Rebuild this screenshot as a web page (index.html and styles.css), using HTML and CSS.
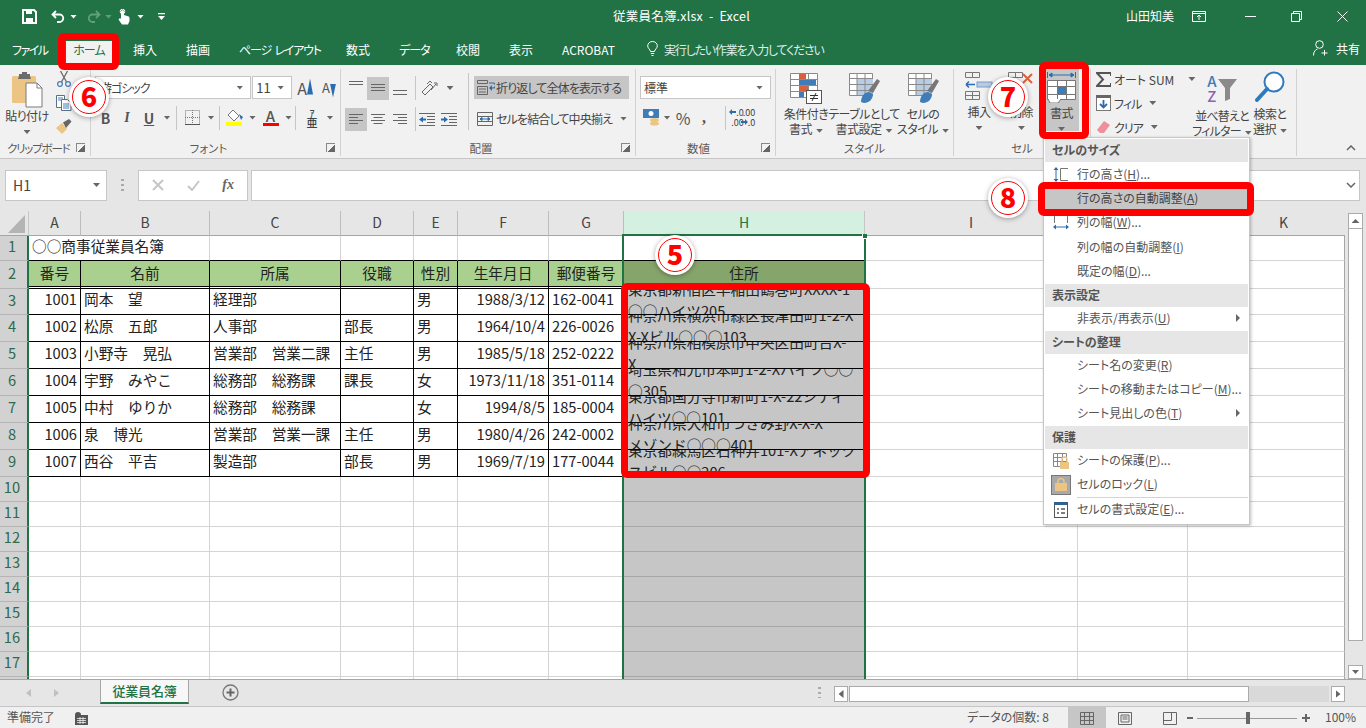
FILE: index.html
```html
<!DOCTYPE html>
<html lang="ja">
<head>
<meta charset="utf-8">
<title>従業員名簿.xlsx - Excel</title>
<link rel="stylesheet" href="styles.css">
</head>
<body>
<div class="app">

<header class="titlebar">
  <div class="qat">
    <svg class="q-save" width="15" height="15" viewBox="0 0 15 15"><path d="M1 1h11l2 2v11H1z" fill="none" stroke="#fff" stroke-width="2"/><rect x="4" y="1" width="6" height="4" fill="#fff"/><rect x="4" y="9" width="7" height="5" fill="#fff"/></svg>
    <svg class="q-undo" width="14" height="14" viewBox="0 0 14 14"><path d="M5 1L1.500 4.500 5 8M2 4.500h6.500a3.500 3.500 0 0 1 0 7.500H6" fill="none" stroke="#fff" stroke-width="1.800"/></svg>
    <i class="caret white c-undo"></i>
    <svg class="q-redo" width="14" height="14" viewBox="0 0 14 14"><path d="M9 1l3.500 3.500L9 8M12 4.500H5.500a3.500 3.500 0 0 0 0 7.500H8" fill="none" stroke="#5f9e7e" stroke-width="1.800"/></svg>
    <i class="caret dim c-redo"></i>
    <svg class="q-touch" width="12" height="16" viewBox="0 0 12 16"><path d="M3 7V2.500a1.500 1.500 0 0 1 3 0V6l4 1.200c1 .3 1.500 1 1.500 2V12l-1.500 3.500H4L.5 10.500 2 9l1 1z" fill="#fff"/><circle cx="4.500" cy="2.500" r="2.300" fill="none" stroke="#fff"/></svg>
    <i class="caret white c-touch"></i>
    <svg class="q-more" width="7" height="7" viewBox="0 0 7 7"><path d="M0 0h7v1.200H0zM0 3h7L3.500 7z" fill="#fff"/></svg>
  </div>
  <div class="doc-title">従業員名簿.xlsx&nbsp; - &nbsp;Excel</div>
  <div class="win">
    <span class="user">山田知美</span>
    <svg class="w-ribbon" width="14" height="11" viewBox="0 0 14 11"><path d="M.5.500h13v10H.5zM.5 2.500h13M7 9V4.500M5 6l2-2 2 2" fill="none" stroke="#fff"/></svg>
    <svg class="w-min" width="11" height="11" viewBox="0 0 11 11"><path d="M0 5.500h11" stroke="#fff"/></svg>
    <svg class="w-max" width="11" height="11" viewBox="0 0 11 11"><path d="M.5 2.500h8v8h-8zM2.500 2.500v-2h8v8h-2" fill="none" stroke="#fff"/></svg>
    <svg class="w-close" width="11" height="11" viewBox="0 0 11 11"><path d="M.5.500l10 10M10.500.500l-10 10" stroke="#fff"/></svg>
  </div>
</header>

<nav class="tabs">
  <span class="tab t-file">ファイル</span>
  <span class="tab t-home">ホーム</span>
  <span class="tab t-ins">挿入</span>
  <span class="tab t-std">描画</span>
  <span class="tab t-page">ページ レイアウト</span>
  <span class="tab t-std">数式</span>
  <span class="tab t-data">データ</span>
  <span class="tab t-std">校閲</span>
  <span class="tab t-std">表示</span>
  <span class="tab t-acro">ACROBAT</span>
  <span class="tell">
    <svg width="11" height="15" viewBox="0 0 11 15"><path d="M3.500 10.500C3 8 .7 7.500.7 4.800a4.800 4.300 0 0 1 9.600 0c0 2.700-2.300 3.200-2.800 5.700zM3.800 12.500h3.400M4.500 14.500h2" fill="none" stroke="#fff"/></svg>
    実行したい作業を入力してください
  </span>
  <span class="share">
    <svg width="16" height="16" viewBox="0 0 16 16"><circle cx="6.500" cy="4.500" r="3.800" fill="none" stroke="#fff"/><path d="M.5 15.500c0-4 2-6 4-6.500M11.500 10v5.500M8.500 13h6" fill="none" stroke="#fff"/></svg>
    共有
  </span>
</nav>

<section class="ribbon">
  <div class="group g1">
    <div class="gbody clip-body">
      <div class="paste">
        <svg width="32" height="36" viewBox="0 0 32 36"><rect x="0" y="4" width="24" height="27" rx="1.500" fill="#ecc585"/><path d="M7 4V2h3V0h5v2h3v2l1 3H6z" fill="#6b6b6b"/><path d="M14 11h11l5 5v19H14z" fill="#fff" stroke="#7a7a7a"/><path d="M25 11v5h5" fill="none" stroke="#7a7a7a"/></svg>
        <span class="big-label">貼り付け</span>
        <i class="caret"></i>
      </div>
      <div class="clip-tools">
        <svg width="14" height="16" viewBox="0 0 14 16"><path d="M3.500 0l6 11M10.500 0l-6 11" stroke="#6a6a6a" stroke-width="1.300"/><circle cx="3" cy="13" r="2.400" fill="none" stroke="#4a7ebb" stroke-width="1.300"/><circle cx="11" cy="13" r="2.400" fill="none" stroke="#4a7ebb" stroke-width="1.300"/></svg>
        <svg width="16" height="16" viewBox="0 0 16 16"><path d="M.5.500h8v12h-8z" fill="#fff" stroke="#5a6f88"/><path d="M5.500 4.500h6l3.500 3.500v7.500H5.500z" fill="#fff" stroke="#5a6f88"/><path d="M7 9h6M7 11h6M7 13h6M2 3h5M2 5h3" stroke="#4a7ebb"/></svg>
        <svg width="16" height="15" viewBox="0 0 16 15"><path d="M0 9l6-5 5 6-5 5z" fill="#ecc585"/><path d="M7 3.500L13 0l2.500 2.500L10 9z" fill="#666"/></svg>
      </div>
    </div>
    <div class="glabel"><span>クリップボード</span><i class="launch"></i></div>
  </div>

  <div class="group g2">
    <div class="gbody col pad-font">
      <div class="font-r1">
        <div class="select font-name"><span>游ゴシック</span><i class="caret"></i></div>
        <div class="select font-size"><span>11</span><i class="caret"></i></div>
        <span class="grow-a">A<i class="tri up"></i></span>
        <span class="grow-a small">A<i class="tri down"></i></span>
      </div>
      <div class="font-r2">
        <b class="fmt">B</b>
        <em class="fmt serif">I</em>
        <u class="fmt under">U</u>
        <i class="caret"></i>
        <i class="vsep"></i>
        <svg width="15" height="15" viewBox="0 0 15 15"><path d="M.5.500h14v14H.5zM7.500 0v15M0 7.500h15" fill="none" stroke="#777" stroke-dasharray="1 1"/><path d="M0 14.500h15" stroke="#555"/></svg>
        <i class="caret"></i>
        <i class="vsep"></i>
        <svg width="18" height="17" viewBox="0 0 18 17"><path d="M7 1l6 6-5 5-6-6z" fill="#fff" stroke="#777"/><path d="M13 5l4 3-2 3z" fill="#2b6cb0"/><rect x="0" y="13" width="16" height="4" fill="#ffff00"/></svg>
        <i class="caret"></i>
        <span class="font-color">A</span>
        <i class="caret"></i>
        <i class="vsep"></i>
        <span class="phonetic"><small>ｱ</small>亜</span>
        <i class="caret"></i>
      </div>
    </div>
    <div class="glabel"><span>フォント</span><i class="launch"></i></div>
  </div>

  <div class="group g3">
    <div class="gbody align">
      <div class="col align-left">
        <div class="al-r1">
          <svg class="al" width="14" height="16" viewBox="0 0 14 16"><path d="M0 1.500h14M0 4.500h14" stroke="#666"/></svg>
          <span class="al on"><svg width="14" height="8" viewBox="0 0 14 8"><path d="M0 .5h14M0 3.500h14M0 6.500h14" stroke="#666"/></svg></span>
          <svg class="al" width="14" height="16" viewBox="0 0 14 16"><path d="M0 10.500h14M0 14.500h14" stroke="#666"/></svg>
          <i></i>
          <i class="vsep"></i>
          <svg width="20" height="16" viewBox="0 0 20 16"><path d="M1 12l8-8 3 3-8 8zM10 10l5-6M13 3h3v3" fill="none" stroke="#666"/><path d="M6 4l3-3 2 2" fill="none" stroke="#666"/></svg>
          <i class="caret"></i>
        </div>
        <div class="al-r2">
          <span class="al on"><svg width="14" height="11" viewBox="0 0 14 11"><path d="M0 .5h14M0 3.500h9M0 6.500h14M0 9.500h9" stroke="#666"/></svg></span>
          <svg width="14" height="11" viewBox="0 0 14 11"><path d="M0 .5h14M2.500 3.500h9M0 6.500h14M2.500 9.500h9" stroke="#666"/></svg>
          <svg width="14" height="11" viewBox="0 0 14 11"><path d="M0 .5h14M5 3.500h9M0 6.500h14M5 9.500h9" stroke="#666"/></svg>
          <i></i>
          <i class="vsep"></i>
          <svg width="16" height="13" viewBox="0 0 16 13"><path d="M0 .5h16M8 3.500h8M8 6.500h8M8 9.500h8M0 12.500h16" stroke="#666"/><path d="M0 6.500L4 3.500v2h3v2H4v2z" fill="#2b6cb0"/></svg>
          <svg width="16" height="13" viewBox="0 0 16 13"><path d="M0 .5h16M8 3.500h8M8 6.500h8M8 9.500h8M0 12.500h16" stroke="#666"/><path d="M7 6.500L3 3.500v2H0v2h3v2z" fill="#2b6cb0"/></svg>
        </div>
      </div>
      <i class="vsep tall"></i>
      <div class="col align-right">
        <div class="wrapbtn on">
          <svg width="18" height="15" viewBox="0 0 18 15"><path d="M.5.500h10v3H.5zM.5 6.500h10v8H.5zM2 9h7M2 12h7" fill="none" stroke="#666"/><path d="M12 3h4a1.500 1.500 0 0 1 0 5h-3" fill="none" stroke="#2b6cb0" stroke-width="1.200"/><path d="M15 5l-3 3 3 3z" fill="#2b6cb0"/></svg>
          <span>折り返して全体を表示する</span>
        </div>
        <div class="wrapbtn">
          <svg width="16" height="14" viewBox="0 0 16 14"><path d="M.5.500h15v13H.5zM.5 4.500h15M.5 9.500h15" fill="none" stroke="#666"/><path d="M3 7h10M3 7l2-1.500v3zM13 7l-2-1.500v3z" stroke="#2b6cb0" fill="#2b6cb0"/></svg>
          <span class="merge-t">セルを結合して中央揃え</span>
          <i class="caret push"></i>
        </div>
      </div>
    </div>
    <div class="glabel"><span class="mid">配置</span><i class="launch"></i></div>
  </div>

  <div class="group g4">
    <div class="gbody col pad-num">
      <div class="select num-fmt"><span>標準</span><i class="caret"></i></div>
      <div class="num-r2">
        <svg width="17" height="17" viewBox="0 0 17 17"><rect x="0" y="0" width="16" height="9" fill="#3f7cb8"/><circle cx="8" cy="4.500" r="2.500" fill="#fff"/><ellipse cx="11.500" cy="11" rx="4.500" ry="2" fill="#ecc585"/><ellipse cx="11.500" cy="14.500" rx="4.500" ry="2" fill="#ecc585"/></svg>
        <i class="caret"></i>
        <span class="pct">%</span>
        <b class="comma">,</b>
        <i class="vsep"></i>
        <span class="dec"><svg width="7" height="6" viewBox="0 0 7 6"><path d="M0 3l3-3v2h4v2H3v2z" fill="#2b6cb0"/></svg>.0<br>.00</span>
        <span class="dec">.00<br><svg width="7" height="6" viewBox="0 0 7 6"><path d="M7 3L4 0v2H0v2h4v2z" fill="#2b6cb0"/></svg>.0</span>
      </div>
    </div>
    <div class="glabel"><span class="mid">数値</span><i class="launch"></i></div>
  </div>

  <div class="group g5">
    <div class="gbody styles">
      <div class="bigbtn">
        <svg width="32" height="31" viewBox="0 0 32 31"><path d="M.5.500h27v24H.5zM9.500.500v24M18.500.500v24M.5 6.500h27M.5 12.500h27M.5 18.500h27" fill="#fff" stroke="#8a8a8a"/><rect x="9" y="1" width="7" height="5" fill="#d9603b"/><rect x="9" y="7" width="17" height="5" fill="#3f7cb8"/><rect x="9" y="13" width="9" height="5" fill="#d9603b"/><rect x="9" y="19" width="5" height="5" fill="#3f7cb8"/><rect x="16.500" y="17.500" width="15" height="13" fill="#fff" stroke="#555"/><path d="M20 22.500h8M20 25.500h8M26 20l-4 8" stroke="#333"/></svg>
        <span class="big-label">条件付き<br>書式<i class="caret in"></i></span>
      </div>
      <div class="bigbtn">
        <svg width="31" height="31" viewBox="0 0 31 31"><path d="M.5.500h23v22H.5z" fill="#fff" stroke="#8a8a8a"/><rect x="8" y="5" width="16" height="17" fill="#b8cce4"/><path d="M0 5.500h24M0 11.500h24M0 17.500h24M8 0v23M16 0v23" stroke="#8a8a8a"/><path d="M19 18L28 6l3 2-7 12z" fill="#777"/><path d="M12 29c0-6 4-10 8-10l4 2c0 5-4 9-9 9z" fill="#3f7cb8"/></svg>
        <span class="big-label">テーブルとして<br>書式設定<i class="caret in"></i></span>
      </div>
      <div class="bigbtn">
        <svg width="31" height="31" viewBox="0 0 31 31"><path d="M.5.500h23v22H.5z" fill="#fff" stroke="#8a8a8a"/><rect x="8" y="5" width="16" height="17" fill="#b8cce4"/><path d="M0 5.500h24M0 11.500h24M0 17.500h24M8 0v23M16 0v23" stroke="#8a8a8a"/><path d="M19 18L28 6l3 2-7 12z" fill="#777"/><path d="M12 29c0-6 4-10 8-10l4 2c0 5-4 9-9 9z" fill="#3f7cb8"/></svg>
        <span class="big-label">セルの<br>スタイル<i class="caret in"></i></span>
      </div>
    </div>
    <div class="glabel"><span>スタイル</span></div>
  </div>

  <div class="group g6">
    <div class="gbody cells">
      <div class="cellbtn">
        <svg width="28" height="28" viewBox="0 0 28 28"><path d="M.5.500h7v5h-7zM7.500.500h7v5h-7zM.5 19.500h7v8h-7zM7.500 19.500h7v8h-7zM.5 23.500h14" fill="none" stroke="#777"/><rect x="12" y="10" width="15" height="5" fill="#b8cce4" stroke="#7a9cc4"/><path d="M1 12.500h9M1 12.500l3-3M1 12.500l3 3" fill="none" stroke="#2b6cb0" stroke-width="1.500"/></svg>
        <span class="big-label">挿入</span>
        <i class="caret"></i>
      </div>
      <div class="cellbtn">
        <svg width="28" height="28" viewBox="0 0 28 28"><path d="M.5.500h7v5h-7zM7.500.500h7v5h-7zM.5 19.500h7v8h-7zM7.500 19.500h7v8h-7z" fill="none" stroke="#777"/><path d="M15 2l9 9M24 2l-9 9" stroke="#d9603b" stroke-width="2"/></svg>
        <span class="big-label">削除</span>
        <i class="caret"></i>
      </div>
      <div class="cellbtn on">
        <svg width="29" height="31" viewBox="0 0 29 31"><path d="M.5 0v6M28.500 0v6M2 3h25M2 3l3-2v4zM27 3l-3-2v4z" stroke="#2b6cb0" fill="#2b6cb0"/><path d="M.5 8.500h28v19H.5z" fill="#fff" stroke="#777"/><rect x="11" y="14" width="8" height="9" fill="#3f7cb8"/><path d="M0 14.500h29M0 22.500h29M10.500 8v19M19.500 8v19" stroke="#777"/><path d="M1 27l2 4h8l3-4" fill="#fff" stroke="#777"/></svg>
        <span class="big-label">書式</span>
        <i class="caret"></i>
      </div>
    </div>
    <div class="glabel"><span>セル</span></div>
  </div>

  <div class="group g7">
    <div class="gbody edit">
      <div class="col edit-list">
        <div class="edit-row"><svg width="15" height="15" viewBox="0 0 15 15"><path d="M15 4V1H1l6 6.500L1 14h14v-3" fill="none" stroke="#555" stroke-width="2"/></svg><span>オート SUM</span><i class="caret c-sum"></i></div>
        <div class="edit-row"><svg width="15" height="16" viewBox="0 0 15 16"><rect x=".5" y=".5" width="14" height="15" fill="#fff" stroke="#777"/><rect x="0" y="0" width="15" height="3" fill="#666"/><path d="M7.500 5v7M4 9l3.500 3.500L11 9" fill="none" stroke="#2b6cb0" stroke-width="1.800"/></svg><span class="tight">フィル</span><i class="caret"></i></div>
        <div class="edit-row"><svg width="15" height="14" viewBox="0 0 15 14"><path d="M8 1l6 4-6 8H4L1 10z" fill="#ee8f9c"/></svg><span class="tight">クリア</span><i class="caret"></i></div>
      </div>
      <div class="bigbtn sort">
        <span class="sort-icon"><span class="az"><b class="aa">A</b><b class="zz">Z</b></span><svg width="19" height="22" viewBox="0 0 19 22"><path d="M0 0h19l-7 9v11l-5 2V9z" fill="#8a8a8a"/></svg></span>
        <span class="big-label">並べ替えと<br>フィルター<i class="caret in"></i></span>
      </div>
      <div class="bigbtn find">
        <svg width="30" height="33" viewBox="0 0 30 33"><circle cx="19" cy="11" r="9.500" fill="#fff" stroke="#2f7abf" stroke-width="2"/><path d="M12 18L2 29" stroke="#2f7abf" stroke-width="4" stroke-linecap="round"/></svg>
        <span class="big-label">検索と<br>選択<i class="caret in"></i></span>
      </div>
    </div>
  </div>

  <div class="collapse"><svg width="10" height="6" viewBox="0 0 10 6"><path d="M1 5l4-4 4 4" fill="none" stroke="#666" stroke-width="1.500"/></svg></div>
</section>

<section class="formula">
  <div class="namebox"><span>H1</span><i class="caret"></i></div>
  <div class="dots"></div>
  <div class="fxbox">
    <svg width="12" height="12" viewBox="0 0 12 12"><path d="M1 1l10 10M11 1L1 11" stroke="#c6c6c6" stroke-width="2"/></svg>
    <svg width="13" height="11" viewBox="0 0 13 11"><path d="M1 6l4 4 7-9" fill="none" stroke="#c6c6c6" stroke-width="2"/></svg>
    <em class="fx">fx</em>
  </div>
  <div class="input"><svg width="10" height="6" viewBox="0 0 10 6"><path d="M1 1l4 4 4-4" fill="none" stroke="#666" stroke-width="1.500"/></svg></div>
</section>

<section class="sheetwrap">
  <div class="sheet">
    <div class="corner"><i></i></div><div class="ch">A</div><div class="ch">B</div><div class="ch">C</div><div class="ch">D</div><div class="ch">E</div><div class="ch">F</div><div class="ch">G</div><div class="ch sel-h">H</div><div class="ch">I</div><div class="ch">J</div><div class="ch end">K</div>

    <div class="rh">1</div><div class="c bb nor">○○商事従業員名簿</div><div class="c bb"></div><div class="c bb"></div><div class="c bb"></div><div class="c bb"></div><div class="c bb"></div><div class="c bb"></div><div class="c bb h1"></div><div class="c"></div><div class="c"></div><div class="c end"></div>

    <div class="rh">2</div><div class="c hd">番号</div><div class="c hd">名前</div><div class="c hd">所属</div><div class="c hd">役職</div><div class="c hd">性別</div><div class="c hd">生年月日</div><div class="c hd">郵便番号</div><div class="c hd hh">住所</div><div class="c"></div><div class="c"></div><div class="c end"></div>

    <div class="rh">3</div><div class="c k r">1001</div><div class="c k">岡本　望</div><div class="c k">経理部</div><div class="c k"></div><div class="c k">男</div><div class="c k r">1988/3/12</div><div class="c k">162-0041</div><div class="c k s addr"><p>東京都新宿区早稲田鶴巻町XXXX-1<br>○○ハイツ205</p></div><div class="c"></div><div class="c"></div><div class="c end"></div>
    <div class="rh">4</div><div class="c k r">1002</div><div class="c k">松原　五郎</div><div class="c k">人事部</div><div class="c k">部長</div><div class="c k">男</div><div class="c k r">1964/10/4</div><div class="c k">226-0026</div><div class="c k s addr"><p>神奈川県横浜市緑区長津田町1-2-X<br>X-Xビル○○○103</p></div><div class="c"></div><div class="c"></div><div class="c end"></div>
    <div class="rh">5</div><div class="c k r">1003</div><div class="c k">小野寺　晃弘</div><div class="c k">営業部　営業二課</div><div class="c k">主任</div><div class="c k">男</div><div class="c k r">1985/5/18</div><div class="c k">252-0222</div><div class="c k s addr"><p>神奈川県相模原市中央区田町台X-<br>X</p></div><div class="c"></div><div class="c"></div><div class="c end"></div>
    <div class="rh">6</div><div class="c k r">1004</div><div class="c k">宇野　みやこ</div><div class="c k">総務部　総務課</div><div class="c k">課長</div><div class="c k">女</div><div class="c k r">1973/11/18</div><div class="c k">351-0114</div><div class="c k s addr"><p>埼玉県和光市本町1-2-Xハイツ○○<br>○305</p></div><div class="c"></div><div class="c"></div><div class="c end"></div>
    <div class="rh">7</div><div class="c k r">1005</div><div class="c k">中村　ゆりか</div><div class="c k">総務部　総務課</div><div class="c k"></div><div class="c k">女</div><div class="c k r">1994/8/5</div><div class="c k">185-0004</div><div class="c k s addr"><p>東京都国分寺市新町1-X-22シティ<br>ハイツ○○101</p></div><div class="c"></div><div class="c"></div><div class="c end"></div>
    <div class="rh">8</div><div class="c k r">1006</div><div class="c k">泉　博光</div><div class="c k">営業部　営業一課</div><div class="c k">主任</div><div class="c k">男</div><div class="c k r">1980/4/26</div><div class="c k">242-0002</div><div class="c k s addr"><p>神奈川県大和市つきみ野X-X-X<br>メゾンド○○○401</p></div><div class="c"></div><div class="c"></div><div class="c end"></div>
    <div class="rh">9</div><div class="c k r">1007</div><div class="c k">西谷　平吉</div><div class="c k">製造部</div><div class="c k">部長</div><div class="c k">男</div><div class="c k r">1969/7/19</div><div class="c k">177-0044</div><div class="c k s addr"><p>東京都練馬区石神井101-Xアネック<br>スビル○○206</p></div><div class="c"></div><div class="c"></div><div class="c end"></div>

    <div class="rh">10</div><div class="c"></div><div class="c"></div><div class="c"></div><div class="c"></div><div class="c"></div><div class="c"></div><div class="c"></div><div class="c s"></div><div class="c"></div><div class="c"></div><div class="c end"></div>
    <div class="rh">11</div><div class="c"></div><div class="c"></div><div class="c"></div><div class="c"></div><div class="c"></div><div class="c"></div><div class="c"></div><div class="c s"></div><div class="c"></div><div class="c"></div><div class="c end"></div>
    <div class="rh">12</div><div class="c"></div><div class="c"></div><div class="c"></div><div class="c"></div><div class="c"></div><div class="c"></div><div class="c"></div><div class="c s"></div><div class="c"></div><div class="c"></div><div class="c end"></div>
    <div class="rh">13</div><div class="c"></div><div class="c"></div><div class="c"></div><div class="c"></div><div class="c"></div><div class="c"></div><div class="c"></div><div class="c s"></div><div class="c"></div><div class="c"></div><div class="c end"></div>
    <div class="rh">14</div><div class="c"></div><div class="c"></div><div class="c"></div><div class="c"></div><div class="c"></div><div class="c"></div><div class="c"></div><div class="c s"></div><div class="c"></div><div class="c"></div><div class="c end"></div>
    <div class="rh">15</div><div class="c"></div><div class="c"></div><div class="c"></div><div class="c"></div><div class="c"></div><div class="c"></div><div class="c"></div><div class="c s"></div><div class="c"></div><div class="c"></div><div class="c end"></div>
    <div class="rh">16</div><div class="c"></div><div class="c"></div><div class="c"></div><div class="c"></div><div class="c"></div><div class="c"></div><div class="c"></div><div class="c s"></div><div class="c"></div><div class="c"></div><div class="c end"></div>
    <div class="rh">17</div><div class="c"></div><div class="c"></div><div class="c"></div><div class="c"></div><div class="c"></div><div class="c"></div><div class="c"></div><div class="c s"></div><div class="c"></div><div class="c"></div><div class="c end"></div>
    <div class="rh stub"></div><div class="c stub"></div><div class="c stub"></div><div class="c stub"></div><div class="c stub"></div><div class="c stub"></div><div class="c stub"></div><div class="c stub"></div><div class="c s stub"></div><div class="c stub"></div><div class="c stub"></div><div class="c end stub"></div>

    <div class="selection"><i></i></div>
  </div>
  <aside class="vscroll">
    <div class="sb-btn up"><i class="tri-up"></i></div>
    <div class="sb-thumb"></div>
    <div class="sb-btn down"><i class="caret"></i></div>
  </aside>
</section>

<section class="tabbar">
  <div class="tabnav"><i class="nav-l"></i><i class="nav-r"></i></div>
  <div class="sheettab">従業員名簿</div>
  <div class="addsheet"><svg width="17" height="17" viewBox="0 0 17 17"><circle cx="8.500" cy="8.500" r="7.500" fill="none" stroke="#777" stroke-width="1.300"/><path d="M8.500 4.500v8M4.500 8.500h8" stroke="#666" stroke-width="2"/></svg></div>
  <div class="dots small"></div>
  <div class="hscroll">
    <div class="sb-btn"><i class="nav-l dark"></i></div>
    <div class="hthumb"></div>
    <div class="htrack"></div>
    <div class="sb-btn"><i class="nav-r dark"></i></div>
  </div>
</section>

<footer class="status">
  <span class="ready">準備完了</span>
  <svg class="macro" width="13" height="13" viewBox="0 0 13 13"><rect x="0" y="3" width="13" height="10" fill="#555"/><circle cx="3" cy="3" r="3" fill="#555"/><path d="M2 6.500h9M2 8.500h9M2 10.500h9M5 5v7M8 5v7" stroke="#f0f0f0" stroke-width=".8"/></svg>
  <span class="count">データの個数: 8</span>
  <span class="view on"><svg width="14" height="13" viewBox="0 0 14 13"><path d="M.5.500h13v12H.5zM.5 4.500h13M.5 8.500h13M4.500 0v13M9.500 0v13" fill="none" stroke="#666"/></svg></span>
  <span class="view"><svg width="14" height="13" viewBox="0 0 14 13"><path d="M.5.500h13v12H.5zM3 3h8v7H3zM4.500 5h5M4.500 7h5" fill="none" stroke="#666"/></svg></span>
  <span class="view v-break"><svg width="14" height="13" viewBox="0 0 14 13"><path d="M.5.500h13v12H.5zM.5 8.500h8V.5" fill="none" stroke="#666"/></svg></span>
  <span class="zoom-m"></span>
  <span class="slider"><i></i></span>
  <span class="zoom-p"></span>
  <span class="pct100">100%</span>
</footer>

<!-- format dropdown -->
<div class="menu">
  <div class="m-head">セルのサイズ</div>
  <div class="m-item t"><span class="m-ic"><svg width="16" height="15" viewBox="0 0 16 15"><path d="M3 1v13" stroke="#2b6cb0"/><path d="M3 0L.5 3h5zM3 15L.5 12h5z" fill="#2b6cb0"/><path d="M15 1.500H7.500v12H15" fill="none" stroke="#777"/></svg></span><span>行の高さ(<u>H</u>)...</span></div>
  <div class="m-item t sel"><span class="m-ic"></span><span>行の高さの自動調整(<u>A</u>)</span></div>
  <div class="m-item t"><span class="m-ic"><svg width="16" height="15" viewBox="0 0 16 15"><path d="M1.500 8V.5h13V8" fill="none" stroke="#777"/><path d="M2 12h12" stroke="#2b6cb0"/><path d="M0 12l3-2.500v5zM16 12l-3-2.500v5z" fill="#2b6cb0"/></svg></span><span>列の幅(<u>W</u>)...</span></div>
  <div class="m-item t"><span class="m-ic"></span><span>列の幅の自動調整(<u>I</u>)</span></div>
  <div class="m-item t"><span class="m-ic"></span><span>既定の幅(<u>D</u>)...</span></div>
  <div class="m-head">表示設定</div>
  <div class="m-item"><span class="m-ic"></span><span>非表示/再表示(<u>U</u>)</span><i class="m-arrow"></i></div>
  <div class="m-head">シートの整理</div>
  <div class="m-item"><span class="m-ic"></span><span>シート名の変更(<u>R</u>)</span></div>
  <div class="m-item"><span class="m-ic"></span><span>シートの移動またはコピー(<u>M</u>)...</span></div>
  <div class="m-item"><span class="m-ic"></span><span>シート見出しの色(<u>T</u>)</span><i class="m-arrow"></i></div>
  <div class="m-head">保護</div>
  <div class="m-item"><span class="m-ic"><svg width="16" height="16" viewBox="0 0 16 16"><path d="M.5.500h13v13H.5zM.5 4.500h13M.5 8.500h13M4.500 0v14M9.500 0v14" fill="none" stroke="#888"/><rect x="7" y="9" width="9" height="7" fill="#ecc585"/><path d="M9 9V6.500a2.500 2.500 0 0 1 5 0V9" fill="none" stroke="#ecc585" stroke-width="1.300"/></svg></span><span>シートの保護(<u>P</u>)...</span></div>
  <div class="m-item"><span class="m-ic"><span class="lockbox"><svg width="12" height="13" viewBox="0 0 12 13"><rect x="0" y="5" width="12" height="8" fill="#ecc585"/><path d="M3 5V3.500a3 3 0 0 1 6 0V5" fill="none" stroke="#ecc585" stroke-width="1.500"/></svg></span></span><span>セルのロック(<u>L</u>)</span></div>
  <div class="m-sep"></div>
  <div class="m-item"><span class="m-ic"><svg width="14" height="16" viewBox="0 0 14 16"><rect x=".5" y=".5" width="13" height="15" fill="#fff" stroke="#555"/><rect x="0" y="0" width="14" height="3" fill="#33618f"/><path d="M3 7h2M3 11h2M7 7h4M7 11h4" stroke="#555" stroke-width="1.300"/></svg></span><span>セルの書式設定(<u>E</u>)...</span></div>
</div>

<!-- red call-outs lying over the UI -->
<div class="mark m-home"></div>
<div class="mark m-format"></div>
<div class="mark m-auto"></div>
<div class="mark m-addr"></div>
<div class="badge b6"><span>6</span></div>
<div class="badge b7"><span>7</span></div>
<div class="badge b8"><span>8</span></div>
<div class="badge b5"><span>5</span></div>

</div>
</body>
</html>
```
FILE: styles.css
```css
*{box-sizing:border-box}
html,body{margin:0;padding:0}
body{font-family:"Noto Sans CJK JP","Noto Sans",sans-serif;color:#444;overflow:hidden;background:#f1f1f1}
.app{position:relative;width:1366px;height:728px;overflow:hidden;display:flex;flex-direction:column;font-size:12px;font-feature-settings:"palt"}
i{display:block;font-style:normal}
svg{display:block;flex:none}

/* generic bits */
.caret{width:7px;height:4px;background:#666;clip-path:polygon(0 0,100% 0,50% 100%);flex:none}
.caret.white{background:#fff}
.caret.dim{background:#5f9e7e}
.caret.in{display:inline-block;margin-left:4px;vertical-align:middle}
.vsep{width:1px;height:24px;background:#c6c6c6}
.col{display:flex;flex-direction:column}
.on{background:#c6c6c6}

/* title bar */
.titlebar{height:33px;background:#217346;color:#fff;display:grid;grid-template-columns:1fr auto 1fr;align-items:center;flex:none}
.qat{display:flex;align-items:center;padding-left:22px}
.q-undo{margin-left:14px}
.c-undo{margin-left:5px}
.q-redo{margin-left:10px}
.c-redo{margin-left:4px}
.q-touch{margin-left:6px}
.c-touch{margin-left:7px}
.q-more{margin-left:14px}
.doc-title{font-size:12.5px;letter-spacing:.2px;margin-left:-3px;padding-bottom:3px}
.win{display:flex;align-items:center;justify-content:flex-end}
.user{font-size:12px;margin-right:18px;padding-bottom:3px}
.w-ribbon{margin-right:39px}
.w-min{margin-right:35px}
.w-max{margin-right:35px}
.w-close{margin-right:18px}

/* tabs */
.tabs{height:32px;background:#217346;color:#fff;display:flex;align-items:flex-end;flex:none;padding-left:12px}
.tab{height:24px;line-height:18px;font-size:12px;text-align:left;white-space:nowrap}
.t-file{width:54px;letter-spacing:-1.5px}
.t-home{width:46px;background:#f1f1f1;color:#217346;text-align:center;letter-spacing:-1px}
.t-ins{width:53px;margin-left:21px}
.t-std{width:53px}
.t-page{width:107px;letter-spacing:-1.2px;word-spacing:2px}
.t-data{width:57px;letter-spacing:-1px}
.t-acro{width:85px}
.tell{display:flex;align-items:flex-start;gap:6px;height:24px;line-height:18px;color:#dfeee6;letter-spacing:-1.2px;white-space:nowrap}
.share{margin-left:auto;margin-right:6px;display:flex;gap:7px;height:26px;line-height:20px;align-items:flex-start}
.share svg{margin-top:1px}

/* ribbon */
.ribbon{height:94px;background:#f1f1f1;border-bottom:1px solid #c6c6c6;display:flex;flex:none;padding-bottom:2px}
.group{display:flex;flex-direction:column;border-right:1px solid #d2d2d2;margin-top:4px;flex:none}
.gbody{flex:1;min-height:0}
.glabel{height:17px;display:flex;align-items:center;font-size:11.5px;color:#5a5a5a;white-space:nowrap}
.glabel span{flex:1;text-align:center}
.launch{width:9px;height:9px;margin-right:5px;border:1px solid #888;border-width:1px 0 0 1px;background:linear-gradient(135deg,transparent 55%,#666 55%)}
.g1{width:91px}.g2{width:250px}.g3{width:295px}.g4{width:140px}.g5{width:178px}.g6{width:137px}.g7{width:206px}
.big-label{font-size:12px;line-height:15px;text-align:center;white-space:nowrap;color:#444;display:block;letter-spacing:-.5px}

.clip-body{display:flex}
.g1 .glabel span{text-align:left;padding-left:7px;letter-spacing:-1.2px}
.paste{width:54px;display:flex;flex-direction:column;align-items:center;padding-top:3px}
.paste svg{margin-left:2px}
.paste .caret{margin-top:7px}
.clip-tools{width:20px;display:flex;flex-direction:column;gap:8px;padding-top:2px;align-items:center}

.pad-font{padding-left:4px}
.font-r1{display:flex;align-items:center;margin-top:7px;height:23px}
.select{display:flex;align-items:center;justify-content:space-between;background:#fff;border:1px solid #c6c6c6;height:23px;padding:0 7px 0 5px;font-size:12px}
.font-name{width:157px;padding-left:4px;letter-spacing:-1px}
.font-size{width:40px;margin-left:1px;padding-left:3px;font-size:13px}
.grow-a{display:flex;font-size:16px;line-height:20px;width:22px;margin-left:2px;justify-content:center;color:#555}
.grow-a.small{font-size:13px}
.tri{width:6px;height:4px;margin-top:1px;background:#2b6cb0}
.tri.up{clip-path:polygon(50% 0,100% 100%,0 100%)}
.tri.down{clip-path:polygon(0 0,100% 0,50% 100%)}
.font-r2{display:grid;grid-template-columns:21px 22px 22px 14px 4px 28px 10px 6px 26px 9px 27px 9px 5px 28px 8px;place-items:center;margin-top:6px;height:25px}
.fmt{font-size:14px;line-height:18px;color:#555;font-style:normal}
.serif{font-family:"Liberation Serif",serif;font-style:italic;font-weight:700}
.under{font-weight:700}
.font-color{font-size:15px;font-weight:500;line-height:14px;color:#555;border-bottom:3px solid #f00;width:16px;text-align:center;height:17px}
.phonetic{display:flex;flex-direction:column;align-items:center;line-height:9px;font-size:11px;color:#444;font-weight:500}
.phonetic small{font-size:10px}

.align{display:flex}
.align-left{width:127px;padding-left:4px}
.al-r1,.al-r2{display:grid;place-items:center;height:23px}
.al-r1{grid-template-columns:22px 22px 22px 4px 1px 30px 8px;margin-top:7px}
.al-r2{grid-template-columns:22px 22px 22px 4px 1px 22px 22px;margin-top:8px}
.al{width:22px;height:23px;display:flex;align-items:center;justify-content:center}
svg.al{width:14px;height:16px}
.tall{height:57px;margin-top:4px;flex:none}
.align-right{padding-left:5px;flex:1}
.wrapbtn{display:flex;align-items:center;gap:1px;height:23px;width:155px;padding-left:3px;margin-top:7px;color:#444;font-size:12px;white-space:nowrap;letter-spacing:-.85px}
.wrapbtn + .wrapbtn{margin-top:8px;gap:2px}
.merge-t{margin-left:1px}
.push{margin-left:auto;margin-right:2px}

.pad-num{padding:7px 4px 0}
.num-fmt{width:131px;padding-left:3px;flex:none}
.num-r2{display:grid;grid-template-columns:22px 10px 22px 20px 22px 1px 22px 22px;place-items:center;height:25px;margin-top:6px}
.pct{font-size:16px;color:#555}
.comma{font-size:16px;line-height:12px;color:#555;font-family:"Liberation Serif",serif}
.dec{font-size:9px;line-height:10px;color:#444;text-align:right;white-space:nowrap}
.dec svg{display:inline-block;vertical-align:1px}

.styles{display:grid;grid-template-columns:52px 64px 54px;padding-left:4px}
.bigbtn{display:flex;flex-direction:column;align-items:center;padding-top:4px;min-width:0}
.bigbtn svg{margin-bottom:2px}
.cells{display:grid;grid-template-columns:42px 43px 36px;padding-left:4px}
.cellbtn{display:flex;flex-direction:column;align-items:center;padding-top:3px}
.cellbtn svg{margin-bottom:4px}
.cellbtn .caret{margin-top:7px}
.cellbtn.on{height:64px;margin-top:-2px;padding-top:5px;margin-left:1px}
.cellbtn.on svg{margin-bottom:2px}
.edit{display:flex;padding-left:5px}
.edit-list{width:100px;padding-top:2px;gap:8px}
.edit-row{display:flex;align-items:center;gap:3px;height:16px;white-space:nowrap;font-size:12px}
.tight{letter-spacing:-1px}
.edit-row .caret{margin-left:5px}
.edit-row .c-sum{margin-left:11px}
.sort{width:52px}
.sort .big-label{letter-spacing:-.8px}
.find{width:44px;padding-top:2px}
.sort-icon{display:flex;align-items:flex-start;height:33px;gap:1px;margin-bottom:2px}
.sort-icon svg{margin-top:6px;margin-bottom:0}
.az{display:flex;flex-direction:column;font-size:15px;line-height:15px;font-weight:500}
.aa{color:#3f7cb8;font-weight:500}.zz{color:#8e5fb5;font-weight:500}
.collapse{flex:1;display:flex;justify-content:flex-end;align-items:flex-end;padding:0 10px 5px 0}

/* formula bar */
.formula{height:52px;background:#e6e6e6;display:flex;align-items:center;padding:0 6px 0 5px;flex:none}
.namebox{width:102px;height:31px;background:#fff;border:1px solid #c6c6c6;display:flex;align-items:center;justify-content:space-between;padding:0 6px 0 7px;font-size:14px;color:#444}
.dots{width:3px;height:13px;margin:0 14px;background:repeating-linear-gradient(#aaa 0 2px,transparent 2px 5px)}
.fxbox{width:110px;height:31px;background:#fff;border:1px solid #c6c6c6;display:flex;align-items:center;padding:0 13px;justify-content:space-between}
.fx{font-family:"Liberation Serif",serif;font-size:14px;font-weight:700;color:#666}
.input{flex:1;height:31px;background:#fff;border:1px solid #c6c6c6;margin-left:3px;display:flex;align-items:center;justify-content:flex-end;padding-right:3px}

/* worksheet */
.sheetwrap{display:flex;height:468px;flex:none;background:#e6e6e6}
.sheet{position:relative;width:1345px;flex:none;display:grid;background:#fff;font-size:14.67px;font-feature-settings:normal;color:#222;
  grid-template-columns:29px 52px 129px 131px 73px 44px 91px 75px 241px 213px 110px 157px;
  grid-template-rows:25px 25px 28px 26px repeat(6,27px) repeat(8,25px) 2px}
.corner{background:#e6e6e6;border-right:1px solid #c6c6c6;border-bottom:1px solid #a6a6a6;padding:4px 3px 2px 8px}
.corner i{width:17px;height:18px;background:#b4b4b4;clip-path:polygon(100% 0,100% 100%,0 100%)}
.ch{background:#e6e6e6;border-right:1px solid #bdbdbd;border-bottom:1px solid #a6a6a6;display:flex;align-items:center;justify-content:center;color:#444;font-size:14px;padding-bottom:2px}
.ch.end{border-right:none;padding-left:34px}
.sel-h{background:#d3f0e0;color:#217346;border-right-color:#c6c6c6}
.rh{background:#d2d2d2;border-right:2px solid #217346;border-bottom:1px solid #b5b5b5;display:flex;align-items:center;justify-content:center;color:#2d6b4c;font-size:14.67px;padding:0 3px 5px 0}
.c{border-right:1px solid #d4d4d4;border-bottom:1px solid #d4d4d4;display:flex;align-items:center;padding:0 3px 6px;white-space:nowrap;min-width:0}
.c.end{border-right:1px solid #a6a6a6}
.bb{border-bottom-color:#000}
.nor{border-right:none}
.hd{background:#a9d08e;background-clip:padding-box;border-right-color:#000;border-bottom:3px double #000;justify-content:center;padding-bottom:3px}
.k{border-right-color:#000;border-bottom-color:#000}
.r{justify-content:flex-end}
.s{background:#c6c6c6;border-right-color:#a6a6a6;border-bottom-color:#a6a6a6}
.hh{background:#86a56b;background-clip:padding-box}
.h1{background:#fff}
.addr{align-items:flex-start;overflow:hidden;padding:0 3px 0 4px;border-bottom-color:#000;border-right-color:#000}
.addr p{margin:-11px 0 0;line-height:21.5px}
.stub{border-bottom:none;padding:0}
.selection{position:absolute;left:622px;top:23px;width:244px;height:445px;border:solid #217346;border-width:2px 2px 0;pointer-events:none}
.selection i{position:absolute;right:-3px;top:-2px;width:5px;height:5px;background:#217346;border:1px solid #fff;border-width:0 0 1px 1px}

.vscroll{flex:1;display:flex;flex-direction:column;padding:2px 3px 0 3px}
.sb-btn{background:#fff;border:1px solid #ababab;display:flex;align-items:center;justify-content:center;flex:none}
.up{height:16px}
.down{height:14px;margin-top:auto}
.tri-up{width:8px;height:4px;background:#666;clip-path:polygon(50% 0,100% 100%,0 100%)}
.sb-thumb{height:412px;background:#fff;border:1px solid #ababab;border-top:none}

/* sheet tabs */
.tabbar{height:28px;background:#e6e6e6;border-top:1px solid #a6a6a6;border-bottom:1px solid #c6c6c6;display:flex;flex:none}
.tabnav{width:100px;display:flex;align-items:center;gap:23px;padding-left:26px}
.nav-l,.nav-r{width:5px;height:8px;background:#c0c0c0}
.nav-l{clip-path:polygon(100% 0,100% 100%,0 50%)}
.nav-r{clip-path:polygon(0 0,100% 50%,0 100%)}
.dark{background:#666}
.sheettab{width:89px;height:24px;background:#f7f7f7;border:1px solid #a6a6a6;border-width:0 1px 2px;border-bottom-color:#217346;color:#217346;text-align:center;font-size:13px;line-height:21px;font-weight:500;font-feature-settings:normal;letter-spacing:-.2px}
.addsheet{width:83px;display:flex;align-items:center;padding:0 0 2px 33px}
.tabbar .dots{margin:7px 13px 0 546px;height:11px}
.hscroll{display:flex;height:16px;margin-top:6px;width:511px}
.hscroll .sb-btn{width:14px}
.hthumb{width:400px;margin-left:1px;background:#fff;border:1px solid #ababab}
.htrack{width:80px;background:#d9d9d9;margin-right:2px}

/* status bar */
.status{height:22px;flex:1;background:#f0f0f0;display:flex;align-items:center;font-size:12px;color:#555}
.ready{margin-left:7px;font-feature-settings:normal;letter-spacing:-.05px;padding-bottom:3px}
.macro{margin-left:20px}
.count{margin-left:auto;margin-right:19px;padding-bottom:3px}
.view{width:38px;height:22px;display:flex;align-items:center;justify-content:center}
.v-break{width:43px;justify-content:flex-end;padding-right:10px}
.zoom-m{width:6px;height:2px;background:#666}
.slider{position:relative;width:100px;height:1px;background:#999;margin-left:4px}
.slider i{position:absolute;left:49px;top:-6px;width:4px;height:12px;background:#666}
.zoom-p{width:8px;height:8px;margin-left:5px;background:linear-gradient(#666,#666) center/8px 2px no-repeat,linear-gradient(#666,#666) center/2px 8px no-repeat}
.pct100{margin-left:15px;margin-right:6px;width:35px;font-size:12px;padding-bottom:3px}

/* drop-down */
.menu{position:absolute;left:1043px;top:137px;width:207px;height:388px;background:#fff;border:1px solid #c6c6c6;box-shadow:1px 1px 3px rgba(0,0,0,.25);padding:1px;font-size:12px;color:#555}
.m-head{height:23px;line-height:22px;background:#e6e6e6;font-weight:700;padding-left:7px;color:#555}
.m-item{height:24px;display:flex;align-items:center;white-space:nowrap;padding-bottom:2px}
.m-item.t{height:24.4px}
.m-item.sel{background:#c6c6c6;color:#444}
.m-ic{width:32px;display:flex;justify-content:center;flex:none;margin-top:2px}
.m-arrow{margin-left:auto;margin-right:8px;width:4px;height:8px;background:#666;clip-path:polygon(0 0,100% 50%,0 100%)}
.m-sep{height:1px;background:#d4d4d4;margin-left:32px}
.lockbox{width:20px;height:20px;background:#a9a9a9;border:1px solid #777;display:flex;align-items:center;justify-content:center}

/* annotations */
.mark{position:absolute;border:7px solid #f00;border-radius:6px;pointer-events:none}
.m-home{left:58px;top:33px;width:61px;height:37px}
.m-format{left:1039px;top:62px;width:50px;height:77px}
.m-auto{left:1038px;top:182px;width:216px;height:34px}
.m-addr{left:621px;top:283px;width:249px;height:195px}
.badge{position:absolute;width:40px;height:40px;border-radius:50%;background:#fff;box-shadow:0 1px 5px rgba(0,0,0,.35);display:flex;align-items:center;justify-content:center}
.badge span{width:34px;height:34px;border-radius:50%;border:1px solid #f00;color:#f00;font-size:27px;font-weight:900;line-height:30px;text-align:center;font-feature-settings:normal}
.b6{left:69px;top:77px}
.b7{left:988px;top:77px}
.b8{left:988px;top:178px}
.b5{left:655px;top:235px}
```
